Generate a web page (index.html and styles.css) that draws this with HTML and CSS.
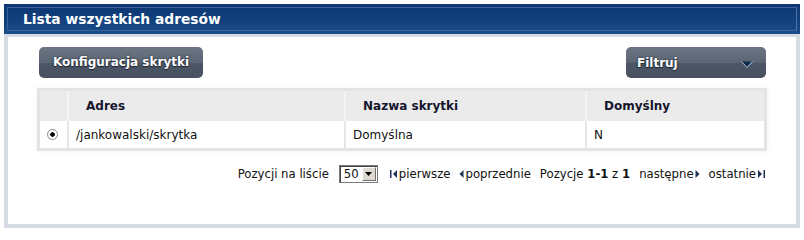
FILE: index.html
```html
<!DOCTYPE html>
<html lang="pl">
<head>
<meta charset="utf-8">
<title>Lista wszystkich adresów</title>
<link rel="stylesheet" href="styles.css">
</head>
<body>
<div class="panel">
  <div class="panel-head"><div class="panel-head-inner">Lista wszystkich adresów</div></div>
  <div class="panel-body">
    <div class="toolbar">
      <button class="btn">Konfiguracja skrytki</button>
      <button class="btn btn-filter"><span>Filtruj</span><svg class="caret" width="12" height="7" viewBox="0 0 12 7"><path d="M0.5 0.5 L11.5 0.5 L6 6.5 Z" fill="#0f2a4f"/><path d="M0.5 0.5 L6 6.5 L11.5 0.5" fill="none" stroke="#b8c4d3" stroke-width="1"/></svg></button>
    </div>
    <div class="table-wrap">
      <table class="grid">
        <thead>
          <tr><th class="c-radio"></th><th class="c-addr">Adres</th><th class="c-name">Nazwa skrytki</th><th class="c-def">Domyślny</th></tr>
        </thead>
        <tbody>
          <tr><td class="c-radio"><span class="radio"></span></td><td>/jankowalski/skrytka</td><td>Domyślna</td><td>N</td></tr>
        </tbody>
      </table>
    </div>
    <div class="pager">
      <span>Pozycji na liście</span>
      <span class="select"><span class="select-val">50</span><span class="select-btn"><svg width="7" height="4" viewBox="0 0 7 4"><path d="M0 0H7L3.5 4Z" fill="#000"/></svg></span></span>
      <span class="plink"><svg width="8" height="10" viewBox="0 0 8 10"><rect x="0" y="1" width="1.5" height="8" fill="#1d3557"/><path d="M7 1V9L3 5Z" fill="#1d3557"/></svg>pierwsze</span>
      <span class="plink"><svg width="5" height="10" viewBox="0 0 5 10"><path d="M4.5 1V9L0.5 5Z" fill="#1d3557"/></svg>poprzednie</span>
      <span>Pozycje <b>1-1</b> z <b>1</b></span>
      <span class="plink">następne<svg width="5" height="10" viewBox="0 0 5 10"><path d="M0.5 1V9L4.5 5Z" fill="#1d3557"/></svg></span>
      <span class="plink">ostatnie<svg width="8" height="10" viewBox="0 0 8 10"><path d="M1 1V9L5 5Z" fill="#1d3557"/><rect x="6.5" y="1" width="1.5" height="8" fill="#1d3557"/></svg></span>
    </div>
  </div>
</div>
</body>
</html>
```
FILE: styles.css
```css
html, body { margin: 0; padding: 0; background: #fff; }
body { padding: 4px; font-family: "DejaVu Sans", Verdana, sans-serif; font-size: 12px; color: #111; }

.panel { width: 796px; }
.panel-head {
  height: 30px;
  background: linear-gradient(#0c3670, #12427f 60%, #1b4d8a);
  padding: 3px;
  box-sizing: border-box;
}
.panel-head-inner {
  height: 24px;
  border: 1px solid #3a6399;
  border-right-color: #4b73a6;
  box-sizing: border-box;
  color: #fff;
  font-weight: bold;
  font-size: 13.8px;
  line-height: 22px;
  padding-left: 15px;
}
.panel-body {
  border: 4px solid #d5dae3;
  border-top-width: 3px;
  height: 194px;
  box-sizing: border-box;
  padding: 10px 29px 0 29px;
}

.toolbar { display: flex; justify-content: space-between; height: 31px; padding: 0 0 0 2px; }
.btn {
  font-family: "DejaVu Sans", Verdana, sans-serif;
  font-weight: bold; font-size: 12px; color: #fff;
  border: 0; border-radius: 5px;
  background: linear-gradient(#6b7583, #5c6573 50%, #4d5665 52%, #485161);
  text-shadow: 0 0 2px #1d2633, 0 1px 1px #1d2633;
  padding: 0 0 2px 0; height: 31px; width: 164px; margin: 0;
}
.btn-filter {
  width: 140px; display: flex; align-items: center; justify-content: space-between;
  padding: 0 13px 0 11px; box-sizing: border-box; margin-right: 1px;
}
.caret { margin-top: 3px; }

.table-wrap {
  margin-top: 10px;
  border: 3px solid #e4e4e4;
  box-shadow: 0 0 6px rgba(0,0,0,0.06);
  width: 730px; box-sizing: border-box;
}
.grid { border-collapse: collapse; width: 100%; }
.grid th {
  background: #ebebeb; height: 30px; text-align: left;
  font-weight: bold; color: #15152e; padding: 0 0 0 17px;
  border-left: 2px solid #f4f4f4;
}
.grid th:first-child, .grid td:first-child { border-left: 0; }
.grid td {
  height: 27px; padding: 0 0 0 7px; border-left: 2px solid #e6e6e6; background: #fff;
}
.c-radio { width: 27px; padding: 0 !important; text-align: center; }
.c-addr { width: 258px; }
.c-name { width: 222px; }
.radio {
  display: inline-block; width: 9px; height: 9px; border-radius: 50%;
  border: 1px solid #8a8a8a; background: radial-gradient(circle, #000 0 2px, #fff 2.5px);
  vertical-align: middle; margin-left: -2px; margin-top: -2px;
}

.pager {
  display: flex; justify-content: flex-end; align-items: center; gap: 9px;
  margin-top: 14px; padding-right: 2px; color: #111; font-size: 11.7px;
}
.select {
  display: inline-flex; align-items: center; height: 18px; width: 39px;
  border: 1px solid #7a7a7a; box-shadow: inset 1px 1px 0 #444; box-sizing: border-box; background: #fff;
  margin: 0 3px 0 1px;
}
.select-val { flex: 1; padding-left: 4px; }
.select-btn {
  width: 14px; height: 14px; margin-right: 1px; background: #ddd9d0;
  border: 1px solid; border-color: #fff #6f6f6f #6f6f6f #fff; box-sizing: border-box;
  display: flex; align-items: center; justify-content: center;
}
.plink { display: inline-flex; align-items: center; gap: 1px; }
.plink svg { display: block; }
```
